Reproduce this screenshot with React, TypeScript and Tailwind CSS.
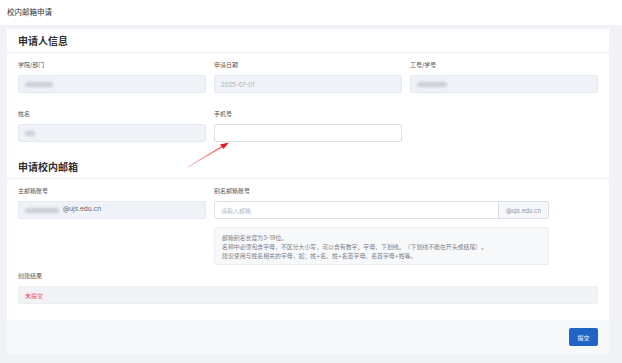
import React from 'react';

const font = "font-['Inter','Noto_Sans_CJK_SC',sans-serif]";

function Label({ children }: { children: React.ReactNode }) {
    return <div className="text-[6px] leading-[8px] text-[#555860] mb-[6px]">{children}</div>;
}

function ReadOnly({ children }: { children?: React.ReactNode }) {
    return (
        <div className="h-[18px] flex items-center px-[6px] bg-[#eff2f7] border border-[#e6e9ef] rounded-[2px] text-[6px] text-[#a8abb2]">
            {children}
        </div>
    );
}

function Blur({ w }: { w: number }) {
    return <span className="inline-block h-[5px] rounded-full bg-[#c9ccd3] blur-[1.5px]" style={{ width: w }} />;
}

function SectionHead({ title }: { title: string }) {
    return (
        <div className="h-[24px] flex items-center px-[11px] border-b border-[#edeff3]">
            <span className="text-[10px] font-bold text-[#303133] leading-none">{title}</span>
        </div>
    );
}

export default function App() {
    return (
        <div className={`relative w-[622px] h-[363px] overflow-hidden bg-[#f0f2f5] ${font}`}>
            {/* page title */}
            <div className="h-[25px] bg-white flex items-center px-[7px]">
                <span className="text-[7.5px] text-[#303133]">校内邮箱申请</span>
            </div>

            <div className="w-[602px] ml-[7px] mt-[4px]">
                <div className="bg-white">
                    <SectionHead title="申请人信息" />
                    <div className="px-[11px] pt-[8px] grid grid-cols-3 gap-x-[8px] gap-y-[17px]">
                        <div>
                            <Label>学院/部门</Label>
                            <ReadOnly><Blur w={28} /></ReadOnly>
                        </div>
                        <div>
                            <Label>申请日期</Label>
                            <ReadOnly>2025-07-01</ReadOnly>
                        </div>
                        <div>
                            <Label>工号/学号</Label>
                            <ReadOnly><Blur w={30} /></ReadOnly>
                        </div>
                        <div>
                            <Label>姓名</Label>
                            <ReadOnly><Blur w={10} /></ReadOnly>
                        </div>
                        <div>
                            <Label>手机号</Label>
                            <div className="h-[18px] bg-white border border-[#dcdfe6] rounded-[2px]" />
                        </div>
                    </div>

                    <div className="mt-[13px]">
                        <SectionHead title="申请校内邮箱" />
                    </div>
                    <div className="px-[11px] pt-[8px] pb-[16px]">
                        <div className="grid grid-cols-3 gap-x-[8px]">
                            <div>
                                <Label>主邮箱账号</Label>
                                <ReadOnly>
                                    <Blur w={34} />
                                    <span className="ml-[4px] text-[6.5px] text-[#606266]">@ujs.edu.cn</span>
                                </ReadOnly>
                            </div>
                            <div className="col-span-2">
                                <Label>别名邮箱账号</Label>
                                <div className="w-[335px] h-[18px] flex border border-[#dcdfe6] rounded-[2px]">
                                    <div className="flex-1 flex items-center px-[6px] text-[6px] text-[#b4b7bd]">请输入邮箱</div>
                                    <div className="w-[50px] flex items-center justify-center bg-[#f5f7fa] border-l border-[#dcdfe6] text-[6px] text-[#909399]">
                                        @ujs.edu.cn
                                    </div>
                                </div>
                                <div className="w-[335px] mt-[8px] h-[38px] flex flex-col justify-center px-[7px] bg-[#f7f8fa] border border-[#eceef2] rounded-[2px] text-[5.9px] leading-[9px] text-[#7d8088]">
                                    <div>邮箱别名长度为3-18位。</div>
                                    <div>名称中必须包含字母，不区分大小写，可以含有数字、字母、下划线。（下划线不能在开头或结尾）。</div>
                                    <div>建议使用与姓名相关的字母，如：姓+名、姓+名首字母、名首字母+姓等。</div>
                                </div>
                            </div>
                        </div>
                        <div className="mt-[7px]">
                            <Label>创建结果</Label>
                            <div className="h-[18px] flex items-center px-[6px] bg-[#f2f3f6] border border-[#eceef2] rounded-[2px] text-[6px] text-[#f04a4a]">
                                未提交
                            </div>
                        </div>
                    </div>
                </div>

                {/* footer */}
                <div className="h-[34px] bg-[#f7f8fa] flex items-center justify-end px-[11px]">
                    <button className="w-[29px] h-[18px] rounded-[2px] bg-[#1f65c6] text-white text-[6px]">提交</button>
                </div>
            </div>

            {/* annotation arrow */}
            <svg className="absolute left-0 top-0" width="622" height="363">
                <defs>
                    <linearGradient id="ar" x1="188" y1="167" x2="228" y2="143" gradientUnits="userSpaceOnUse">
                        <stop offset="0" stopColor="#e06060" stopOpacity="0.3" />
                        <stop offset="1" stopColor="#e02020" />
                    </linearGradient>
                </defs>
                <line x1="188" y1="167" x2="224" y2="145.5" stroke="url(#ar)" strokeWidth="1.4" strokeLinecap="round" />
                <polygon points="229,142.5 220,144.5 223.5,149" fill="#e02020" />
            </svg>
        </div>
    );
}
